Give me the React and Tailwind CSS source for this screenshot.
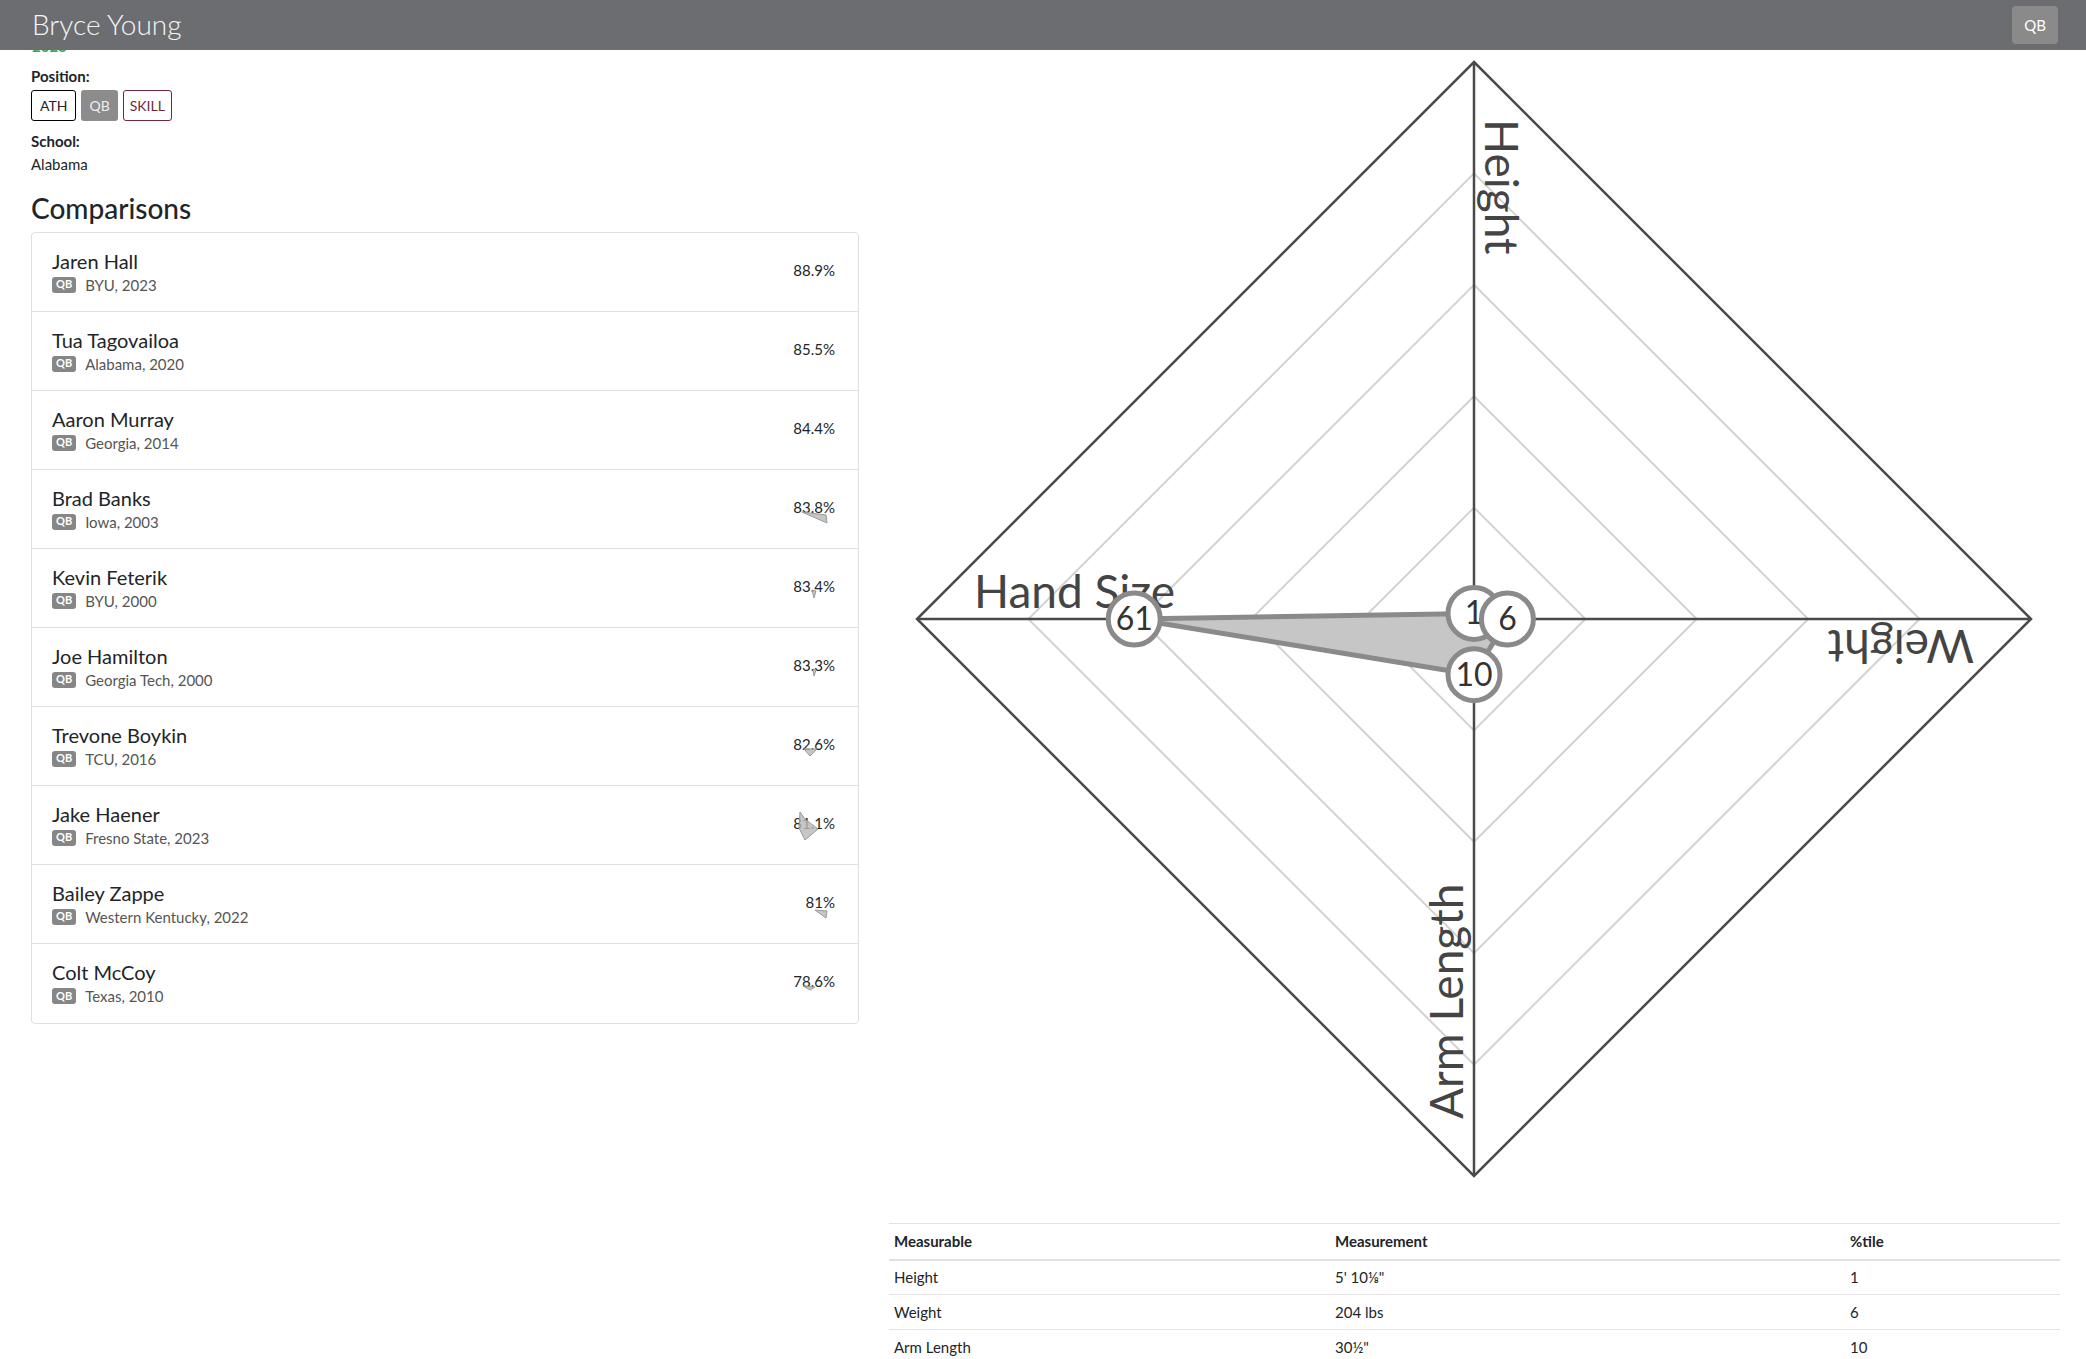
import React from 'react';

const comparisons = [
  { name: 'Jaren Hall', school: 'BYU, 2023', pct: '88.9%', mark: null },
  { name: 'Tua Tagovailoa', school: 'Alabama, 2020', pct: '85.5%', mark: null },
  { name: 'Aaron Murray', school: 'Georgia, 2014', pct: '84.4%', mark: null },
  { name: 'Brad Banks', school: 'Iowa, 2003', pct: '83.8%', mark: '-12,5 12,8 13,16' },
  { name: 'Kevin Feterik', school: 'BYU, 2000', pct: '83.4%', mark: '-2,4 2,5 0,12' },
  { name: 'Joe Hamilton', school: 'Georgia Tech, 2000', pct: '83.3%', mark: '-1,4 2,5 0,11' },
  { name: 'Trevone Boykin', school: 'TCU, 2016', pct: '82.6%', mark: '-10,5 3,5 -4,12' },
  { name: 'Jake Haener', school: 'Fresno State, 2023', pct: '81.1%', mark: '-14,-11 -9,-4 4,6 -9,17 -15,5' },
  { name: 'Bailey Zappe', school: 'Western Kentucky, 2022', pct: '81%', mark: '-5,8 7,9 6,16' },
  { name: 'Colt McCoy', school: 'Texas, 2010', pct: '78.6%', mark: '-11,5 1,6 -4,9' },
];

const measurables = [
  { label: 'Height', value: "5' 10⅛\"", pct: 1 },
  { label: 'Weight', value: '204 lbs', pct: 6 },
  { label: 'Arm Length', value: '30½"', pct: 10 },
];

// axes go clockwise from the top: Height, Weight, Arm Length, Hand Size
const axes = [
  { label: 'Height', value: 1, dx: 0, dy: -1, rot: 90 },
  { label: 'Weight', value: 6, dx: 1, dy: 0, rot: 180 },
  { label: 'Arm Length', value: 10, dx: 0, dy: 1, rot: 270 },
  { label: 'Hand Size', value: 61, dx: -1, dy: 0, rot: 0 },
];

const RadarChart = () => {
  const cx = 585;
  const cy = 569;
  const R = 557;
  const ring = (f) =>
    axes.map((a) => `${cx + a.dx * R * f},${cy + a.dy * R * f}`).join(' ');
  const pts = axes.map((a) => ({
    ...a,
    x: cx + (a.dx * R * a.value) / 100,
    y: cy + (a.dy * R * a.value) / 100,
  }));

  return (
    <svg width="1171" height="1160" viewBox="0 0 1171 1160" className="block">
      {[0.2, 0.4, 0.6, 0.8].map((f) => (
        <polygon key={f} points={ring(f)} fill="none" stroke="#d2d2d2" strokeWidth="2" />
      ))}
      <polygon points={ring(1)} fill="none" stroke="#4a4a4a" strokeWidth="2.5" />
      {axes.map((a) => (
        <line
          key={a.label}
          x1={cx}
          y1={cy}
          x2={cx + a.dx * R}
          y2={cy + a.dy * R}
          stroke="#4a4a4a"
          strokeWidth="2.5"
        />
      ))}
      {axes.map((a) => (
        <text
          key={a.label}
          x={cx - R + 57}
          y={cy - 11}
          transform={`rotate(${a.rot} ${cx} ${cy})`}
          fontFamily="Lato, sans-serif"
          fontSize="46"
          fill="#444"
        >
          {a.label}
        </text>
      ))}
      <polygon
        points={pts.map((p) => `${p.x},${p.y}`).join(' ')}
        fill="#c6c6c6"
        stroke="#8a8a8a"
        strokeWidth="5"
        strokeLinejoin="round"
      />
      {pts.map((p) => (
        <g key={p.label}>
          <circle cx={p.x} cy={p.y} r="26" fill="#fff" stroke="#8a8a8a" strokeWidth="5" />
          <text
            x={p.x}
            y={p.y + 11}
            textAnchor="middle"
            fontFamily="Lato, sans-serif"
            fontSize="32"
            fill="#333"
          >
            {p.value}
          </text>
        </g>
      ))}
    </svg>
  );
};

const App = () => {
  return (
    <div className="min-h-screen bg-white font-['Lato',sans-serif] text-[#212529]">
      {/* Top bar */}
      <header className="h-[50px] bg-[#6c6d70] flex items-center justify-between pl-[32px] pr-[28px] relative z-10">
        <h1 className="text-[28px] font-light text-[#f4f4f4] leading-none -mt-[3px]">Bryce Young</h1>
        <button className="w-[46px] h-[38px] rounded-[4px] bg-[#8a8a8a] text-white text-[15px]">QB</button>
      </header>

      <div className="flex items-start">
        {/* Left column */}
        <div className="ml-[31px] w-[828px] shrink-0">
          <div className="h-[3px] overflow-hidden -mt-[1px] pl-[1px]">
            <div className="-mt-[11px] text-[15px] leading-[16px] font-bold text-[#38a85a]">2023</div>
          </div>
          <p className="mt-[13px] text-[15px] leading-[22px] font-bold">Position:</p>
          <div className="flex gap-[5px] mt-[3px]">
            <span className="h-[31px] px-[8px] flex items-center border border-black rounded-[3px] text-[14px]">ATH</span>
            <span className="h-[31px] px-[8px] flex items-center bg-[#8c8c8c] rounded-[3px] text-[14px] text-[#f0f0f0]">QB</span>
            <span className="h-[31px] px-[6px] flex items-center border border-[#6e2a39] rounded-[3px] text-[14px] text-[#6e2a39]">SKILL</span>
          </div>
          <p className="mt-[9px] text-[15px] leading-[22px] font-bold">School:</p>
          <p className="mt-[1px] text-[15px] leading-[22px]">Alabama</p>
          <h2 className="mt-[16px] text-[28px] leading-[34px] font-medium">Comparisons</h2>

          <ul className="mt-[7px] border border-[#dfdfdf] rounded-[4px]">
            {comparisons.map((c, i) => (
              <li
                key={c.name}
                className={`h-[79px] flex items-center justify-between pl-[20px] pr-[23px] ${
                  i < comparisons.length - 1 ? 'border-b border-[#e0e0e0]' : ''
                }`}
              >
                <div className="-mt-[2px]">
                  <p className="text-[20px] leading-[26px] text-[#212529]">{c.name}</p>
                  <div className="flex items-center gap-[9px] mt-[1px]">
                    <span className="h-[16px] px-[4px] flex items-center rounded-[3px] bg-[#868686] text-white text-[11px] font-bold">QB</span>
                    <span className="text-[15px] leading-[20px] text-[#555]">{c.school}</span>
                  </div>
                </div>
                <div className="relative -mt-[5px]">
                  <span className="text-[15px] text-[#212529]">{c.pct}</span>
                  {c.mark && (
                    <svg
                      width="40"
                      height="40"
                      viewBox="-20 -20 40 40"
                      className="absolute left-1/2 top-1/2 -translate-x-1/2 -translate-y-1/2 pointer-events-none"
                    >
                      <polygon points={c.mark} fill="#b8b8b8" fillOpacity="0.8" stroke="#9a9a9a" strokeWidth="1" />
                    </svg>
                  )}
                </div>
              </li>
            ))}
          </ul>
        </div>

        {/* Right column */}
        <div className="ml-[30px] w-[1171px] shrink-0">
          <RadarChart />
          <table className="mt-[13px] w-full text-[15px] text-left">
            <thead>
              <tr className="border-t border-[#e3e3e3] border-b-2 border-b-[#dee2e6]">
                <th className="w-[441px] h-[36px] px-[5px] font-bold">Measurable</th>
                <th className="w-[515px] px-[5px] font-bold">Measurement</th>
                <th className="px-[5px] font-bold">%tile</th>
              </tr>
            </thead>
            <tbody>
              {measurables.map((m, i) => (
                <tr key={m.label} className={i < measurables.length - 1 ? 'border-b border-[#e3e3e3]' : ''}>
                  <td className="h-[35px] px-[5px]">{m.label}</td>
                  <td className="px-[5px]">{m.value}</td>
                  <td className="px-[5px]">{m.pct}</td>
                </tr>
              ))}
            </tbody>
          </table>
        </div>
      </div>
    </div>
  );
};

export default App;
